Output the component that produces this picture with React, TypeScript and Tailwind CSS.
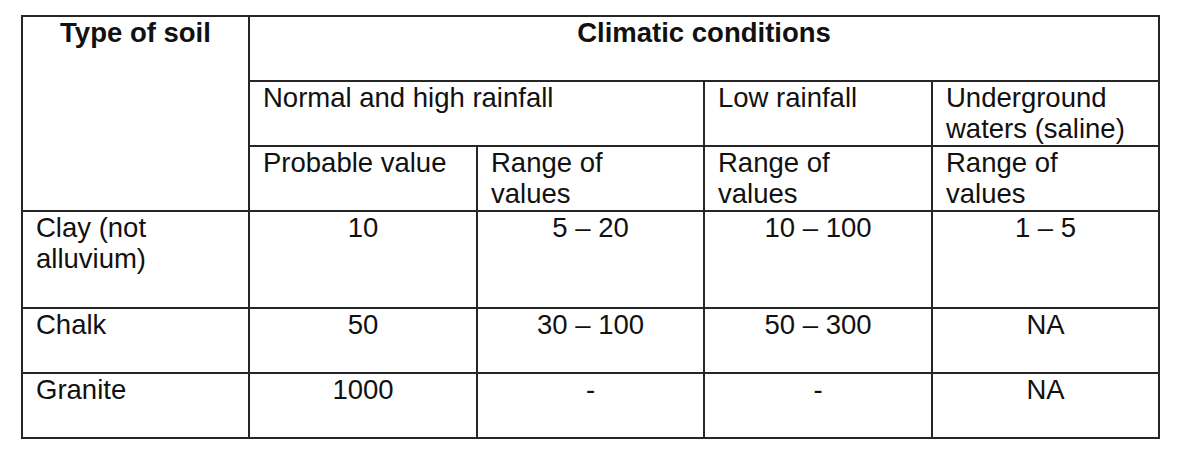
const cell = 'border-2 border-[#262626] align-top px-[13px] pt-0 pb-0';

const rows = [
  { soil: ['Clay (not', 'alluvium)'], probable: '10', high: '5 – 20', low: '10 – 100', saline: '1 – 5', tall: true },
  { soil: ['Chalk'], probable: '50', high: '30 – 100', low: '50 – 300', saline: 'NA', tall: false },
  { soil: ['Granite'], probable: '1000', high: '-', low: '-', saline: 'NA', tall: false },
];

export default function App() {
  return (
    <div className="min-h-[451px] w-[1181px] bg-white pl-[21px] pt-[15px]">
      <table
        className="table-fixed border-collapse text-[27.5px] leading-[31px] text-[#111]"
        style={{ fontFamily: '"Liberation Sans", Arial, sans-serif', width: 1137 }}
      >
        <colgroup>
          <col className="w-[227px]" />
          <col className="w-[228px]" />
          <col className="w-[227px]" />
          <col className="w-[228px]" />
          <col className="w-[227px]" />
        </colgroup>
        <thead>
          {/* Header */}
          <tr className="h-[65px]">
            <th rowSpan={3} className={`${cell} text-center font-bold`}>
              Type of soil
            </th>
            <th colSpan={4} className={`${cell} text-center font-bold`}>
              Climatic conditions
            </th>
          </tr>
          <tr className="h-[65px]">
            <th colSpan={2} className={`${cell} text-left font-normal`}>
              Normal and high rainfall
            </th>
            <th className={`${cell} text-left font-normal`}>Low rainfall</th>
            <th className={`${cell} text-left font-normal`}>
              Underground
              <br />
              waters (saline)
            </th>
          </tr>
          <tr className="h-[65px]">
            <th className={`${cell} text-left font-normal`}>Probable value</th>
            <th className={`${cell} text-left font-normal`}>
              Range of
              <br />
              values
            </th>
            <th className={`${cell} text-left font-normal`}>
              Range of
              <br />
              values
            </th>
            <th className={`${cell} text-left font-normal`}>
              Range of
              <br />
              values
            </th>
          </tr>
        </thead>
        <tbody>
          {rows.map(r => (
            <tr key={r.soil[0]} className={r.tall ? 'h-[97px]' : 'h-[65px]'}>
              <td className={`${cell} text-left`}>
                {r.soil.map((line, i) => (
                  <span key={i} className="block">
                    {line}
                  </span>
                ))}
              </td>
              <td className={`${cell} text-center`}>{r.probable}</td>
              <td className={`${cell} text-center`}>{r.high}</td>
              <td className={`${cell} text-center`}>{r.low}</td>
              <td className={`${cell} text-center`}>{r.saline}</td>
            </tr>
          ))}
        </tbody>
      </table>
    </div>
  );
}
